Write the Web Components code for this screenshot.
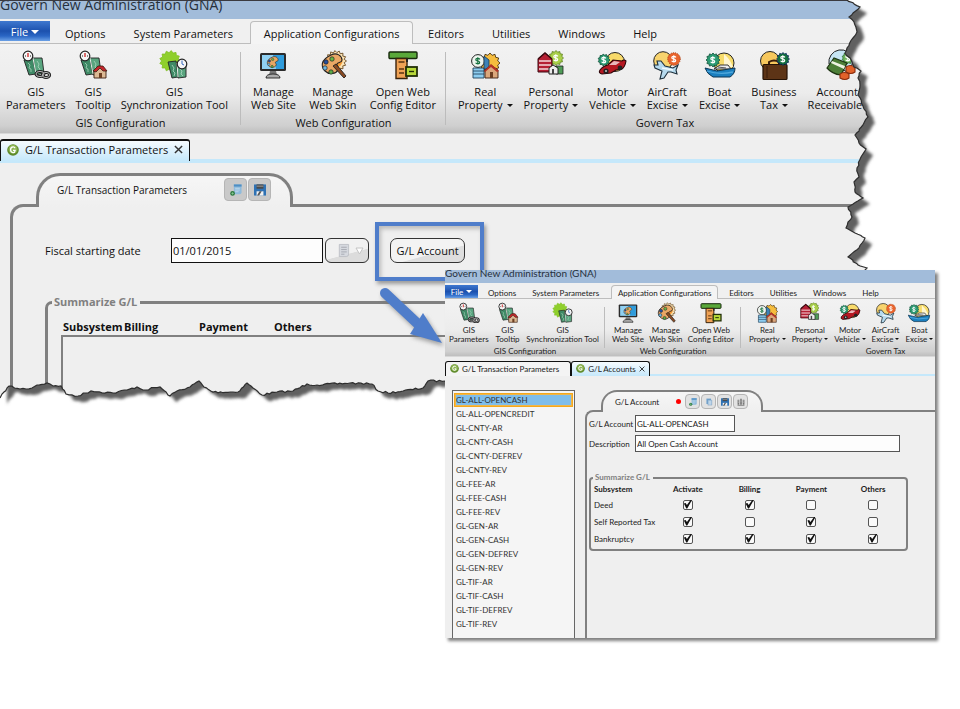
<!DOCTYPE html>
<html lang="en">
<head>
<meta charset="utf-8">
<title>Govern New Administration (GNA)</title>
<style>
  body { margin: 0; background: #fff; }
</style>
</head>
<body>
<gna-stage></gna-stage>

<script>
/* Registers an element with an open shadow root holding the given style and markup. */
function define(name, css, html, setup) {
  const tpl = document.createElement('template');
  tpl.innerHTML = '<style>*{box-sizing:border-box}button,input{font:inherit;color:inherit;margin:0}' + css + '</style>' + html;
  customElements.define(name, class extends HTMLElement {
    connectedCallback() {
      if (this.shadowRoot) return;
      const root = this.attachShadow({ mode: 'open' });
      root.append(tpl.content.cloneNode(true));
      if (setup) setup(this, root);
    }
  });
}

/* ---------- icon drawings, all on a 28 unit grid ---------- */
const star = (cx, cy, r, n, fill, stroke) => {
  let p = '';
  for (let i = 0; i < n * 2; i++) {
    const a = Math.PI * i / n, q = i % 2 ? r * 0.8 : r;
    p += (cx + q * Math.cos(a)).toFixed(1) + ',' + (cy + q * Math.sin(a)).toFixed(1) + ' ';
  }
  return `<polygon points="${p}" fill="${fill}" stroke="${stroke || 'none'}" stroke-width=".8"/>`;
};
const dollar = (x, y, c) => `<path d="M${x + 2} ${y - 1.6}q-1-1.2-2.4-1.1-1.8.1-1.8 1.4 0 1 1.9 1.3 2 .3 2 1.4 0 1.3-1.9 1.4-1.5 0-2.2-1.1M${x - .2} ${y - 3.8}v7.4" fill="none" stroke="${c}" stroke-width="1.2"/>`;
const books = `<path d="M2 9l9-2 3 16-7 1z" fill="#3f8a66" stroke="#222" stroke-width=".9"/><path d="M11 7l9 0 2 15-8 2z" fill="#59a57f" stroke="#222" stroke-width=".9"/><path d="M6 12l2 2-1 3 2 1 0 3M15 10l2 3-1 3 2 2-1 3" fill="none" stroke="#b4dcc6" stroke-width=".7"/><path d="M11 7l3 16" stroke="#e8f4ec" stroke-width="1"/><circle cx="6" cy="5" r="4.8" fill="#f6f6f6" stroke="#222" stroke-width="1.2"/><path d="M6 2v4" stroke="#c22" stroke-width="1.3"/><path d="M3 5h1M8 5h1" stroke="#222"/>`;
const palette = `<path d="M12 4c6-3 11 1 11 5 0 3-4 2-5 4s3 3 1 6c-2 4-9 5-13 1S1 9 12 4z" fill="#e9a765" stroke="#222" stroke-width="1.1"/><circle cx="13" cy="8" r="2.2" fill="#69b544" stroke="#222" stroke-width=".7"/><circle cx="7" cy="11" r="2.2" fill="#244fa0" stroke="#222" stroke-width=".7"/><circle cx="6" cy="17" r="2.2" fill="#6db8e4" stroke="#222" stroke-width=".7"/><circle cx="12" cy="21" r="2.2" fill="#5aaa46" stroke="#222" stroke-width=".7"/>`;
const ICONS = {
  params: books + `<g fill="none" stroke="#222" stroke-width="3"><ellipse cx="18" cy="23" rx="4" ry="2.6"/><ellipse cx="24" cy="24" rx="3.6" ry="2.6"/></g><g fill="none" stroke="#b5b5b5" stroke-width="1"><ellipse cx="18" cy="23" rx="4" ry="2.6"/><ellipse cx="24" cy="24" rx="3.6" ry="2.6"/></g>`,
  tooltip: books + `<path d="M15 27v-7l6-5 6 5v7z" fill="#dcb995" stroke="#3a1d10" stroke-width=".9"/><path d="M14 20l5-5h5l4 5h-4l-3-3-4 4z" fill="#c3262c" stroke="#3a1d10" stroke-width=".8"/><path d="M20 22h3v5h-3z" fill="#6d3f22"/>`,
  sync: star(10, 10, 10.500, 13, '#8fcf2c', '#7fbf22') + `<path d="M8 11l8-1 2 16-6 1z" fill="#3f8a66" stroke="#222" stroke-width=".9"/><path d="M17 12l9 1v13l-8 1z" fill="#59a57f" stroke="#222" stroke-width=".9"/><path d="M12 14l2 3-1 3 2 2-1 3M20 18l2 2-1 3 2 2" fill="none" stroke="#b4dcc6" stroke-width=".8"/><path d="M17 12l1 14" stroke="#e8f4ec"/><circle cx="22" cy="13" r="4.8" fill="#f6f6f6" stroke="#222" stroke-width="1.2"/><path d="M22 13V9.500M22 13l2 1" stroke="#3568c0"/>`,
  site: `<rect x="1" y="2" width="26" height="18" rx="1.500" fill="#2b2b2b"/><rect x="3" y="4" width="22" height="14" fill="#8fd0f2"/><path d="M14 4h11v14h-8z" fill="#2f9cdc"/><path d="M11 20h6l1 4h-8z" fill="#777"/><path d="M7 27q0-4 7-4t7 4z" fill="#aaa" stroke="#222" stroke-width=".9"/><g transform="translate(6.500 4) scale(.55)">${palette}</g>`,
  skin: star(17, 10, 10.500, 15, '#fbe3b4', '#5a3a10') + `<circle cx="17" cy="10" r="6.500" fill="#f59a35"/>` + palette + `<path d="M14 15l3-2 10 12-2 2z" fill="#8a4a22" stroke="#222" stroke-width=".9"/>`,
  config: `<rect x="0" y="1" width="28" height="6.500" rx="1" fill="#5aa83a" stroke="#16290c" stroke-width="1.400"/><path d="M7 7.500h11v20H7z" fill="#f0a255" stroke="#3a230c" stroke-width="1.400"/><path d="M9.500 11h6M10 18h5M10 22h5" stroke="#5a3310" stroke-width="1.300"/><path d="M18 11v-3.500" stroke="#222" stroke-width="2"/><rect x="17" y="16" width="11" height="9" fill="#b8d93a" stroke="#222f08" stroke-width="1.800"/><path d="M20 20.500h5" stroke="#222f08" stroke-width="1.400"/>`,
  real: star(19, 12, 10, 12, '#f6bd3e', '#3a2404') + `<circle cx="7" cy="10" r="6.400" fill="#eef4ee" stroke="#222"/>` + dollar(7, 10, '#14703e') + `<path d="M2 27V17h11v10z" fill="#8dcdf0" stroke="#23445c" stroke-width=".9"/><path d="M2 20h11M2 23h11M13 5l5 4v9h-5z" fill="#3c82b8" stroke="#1c3850" stroke-width=".8"/><path d="M14 27v-8l6-5 7 5v8z" fill="#dba77c" stroke="#3a1d10" stroke-width=".9"/><path d="M13 20l7-7 8 7-2 1-6-5-6 5z" fill="#b43226"/><path d="M19 21h3v6h-3z" fill="#6d3f22"/>`,
  personal: star(19, 7, 7.5, 12, '#a9cf4a', '#597d18') + dollar(19, 7, '#fff') + `<path d="M1 21V8l7-6 7 6v13z" fill="#b51f33" stroke="#3b0910"/><path d="M2 10h12M2 14h12M2 18h12" stroke="#f3d9dc" stroke-width="1.400"/><path d="M1 8l7-6 7 6" fill="none" stroke="#3b0910" stroke-width="1.600"/><path d="M19 15h7v8h-7z" fill="#4f9c57" stroke="#222" stroke-width=".8"/><path d="M12 23v-6l4-3 5 3v6z" fill="#ededed" stroke="#222"/><path d="M15 18h2v5h-2z" fill="#444"/>`,
  motor: `<circle cx="17" cy="11" r="9.500" fill="#f8da6a" stroke="#222"/>` + star(6, 9, 6, 11, '#2b9a72', '#11523a') + dollar(6, 9, '#fff') + `<path d="M2 19q3-4 8-5l5-5 9 1q2-2 4 0-1 6-4 8l-6 1-5 3-9 1q-4-1-2-4z" fill="#b51822" stroke="#2b0508" stroke-width="1.100"/><path d="M11 14l5-4 6 1-4 3z" fill="#e8b9bd"/><circle cx="8" cy="20" r="2.600" fill="#222"/><circle cx="22" cy="17" r="2.400" fill="#222"/><circle cx="8" cy="20" r="1" fill="#ccc"/>`,
  air: `<circle cx="10" cy="10" r="9.300" fill="#f8d46e" stroke="#222"/><circle cx="21" cy="8" r="6.300" fill="#e8642d" stroke="#a83c10" stroke-dasharray="1 1"/>` + dollar(21, 8, '#fff') + `<path d="M4 10l4 0 4 5 8 2 5-3-2 5 1 4-6-2-3 0-4 6-4 1 2-8-7-3-1-3 4 0z" fill="#b6daee" stroke="#1d2f3b" stroke-width="1.100"/><path d="M9 17l11 2" stroke="#f4fafd" stroke-width="1.300"/>`,
  boat: `<ellipse cx="18" cy="12" rx="10" ry="10" fill="#f7dc6b" stroke="#222"/><path d="M18 3q6 5 9 13l-9 1z" fill="#fff6cf"/>` + star(7, 9, 7, 12, '#2b9a72', '#11523a') + dollar(7, 9, '#fff') + `<path d="M8 18l6-4 8 0 3 4z" fill="#ededed" stroke="#222" stroke-width=".9"/><path d="M12 16l8 1" stroke="#555"/><path d="M-1 17l12 3 18-3q0 6-5 9H7q-6-3-8-9z" fill="#1b7fbf" stroke="#0d3552"/><path d="M1 20q12 4 26 1" fill="none" stroke="#4fa8dc" stroke-width="1.300"/>`,
  business: `<circle cx="10" cy="10" r="9.500" fill="#f7c85d" stroke="#222"/><path d="M9 15v-4q5-3 10 0v4" fill="none" stroke="#3a1d0b" stroke-width="2"/><rect x="3" y="13.500" width="24" height="15" rx="1" fill="#5d3416" stroke="#241205" stroke-width="1.200"/><path d="M7 15v12" stroke="#3a1d0b"/>` + star(23, 8, 6.500, 12, '#14713f', '#0a2a5c') + dollar(23, 8, '#fff'),
  accounts: `<path d="M3 13a11 11 0 0 1 24-4l-3 13z" fill="#c6e6f4" stroke="#222"/>` + star(22, 7, 6, 11, '#6fb35d', '#2b6f35') + dollar(22, 7, '#fff') + `<path d="M1 17l7-10 13 5-6 12q-9-1-14-7z" fill="#4d7f38" stroke="#1d3312" stroke-width="1.200"/><path d="M6 10l13 5-1 3-13-6z" fill="#eef3e2"/><path d="M14 23q4-3 9 0v4q-4 3-9 0zM20 16q4-3 9 0v5q-4 3-9 0z" fill="#e2622a" stroke="#8b2c0c" stroke-width="1.100"/>`,
  gem: `<circle cx="14" cy="14" r="13.500" fill="#5f8a2c"/><circle cx="14" cy="12" r="10.500" fill="#8db552"/><path d="M19 10q-2-4-6-3-5 1-4.500 7t6 6q4 0 4.500-5h-5" fill="none" stroke="#fff" stroke-width="3"/>`,
  add: `<path d="M9 1h18v18q0 5-5 5H9z" fill="#8fbbdc"/><path d="M9 1h18v5H9z" fill="#4f8fc4"/><path d="M12 10h11M12 14h11M12 18h8" stroke="#d6e7f4" stroke-width="1.500"/><circle cx="6" cy="22" r="5.500" fill="#2c7a3e"/><path d="M6 19v6M3 22h6" stroke="#9fd6ac" stroke-width="1.400"/>`,
  copy: `<path d="M5 2h16v19H5z" fill="#6fa2cd"/><path d="M10 7h14v18H10z" fill="#a9c8e2" stroke="#6388ae"/><path d="M13 13h8M13 17h8M13 21h8" stroke="#eef5fb" stroke-width="1.400"/>`,
  save: `<path d="M0 1h28v26H0z" fill="#2f72b4"/><path d="M6 1h16v10H6z" fill="#4a4a4a"/><path d="M6 5h16" stroke="#aaa" stroke-width="2"/><path d="M6 17h16v10H6z" fill="#f2f2f2"/><path d="M7 27l6-10h5l-6 10z" fill="#555"/>`,
  chart: `<path d="M2 6h6v18H2zM11 3h6v21h-6zM20 6h6v18h-6z" fill="#777"/><path d="M4 10h2M13 7h2M22 10h2M4 15h2M13 13h2M22 15h2" stroke="#fff" stroke-width="2"/><path d="M2 26h24" stroke="#555" stroke-width="2"/>`,
  note: `<path d="M5 1h20v21q0 5-5 5H5z" fill="#d6d9df" stroke="#b3b6bd" stroke-width="1.500"/><path d="M9 7h12M9 12h12M9 17h12M9 22h7" stroke="#a4a8b0" stroke-width="2"/>`
};

define('gna-icon', `:host{display:block;width:var(--icon-size,28px);height:var(--icon-size,28px)}svg{display:block;width:100%;height:100%;overflow:visible}`, '',
  (host, root) => {
    root.innerHTML += `<svg viewBox="0 0 28 28" aria-hidden="true">${ICONS[host.getAttribute('name')]}</svg>`;
  });

/* ---------- window chrome ---------- */
define('title-bar', `
  :host{display:block;height:var(--title-h);overflow:hidden;background:#a2bcda;border-top:var(--title-line) solid #3a3a40;color:#26303c}
  div{font-size:var(--title-fs);line-height:20px;margin-top:var(--title-shift);white-space:nowrap}`,
  `<div><slot></slot></div>`);

define('menu-bar', `
  :host{display:flex;align-items:flex-end;height:var(--menu-h);background:#f0f0f0;border-bottom:1px solid #bdbdbd;padding-right:0}
  button{border:1px solid transparent;border-bottom:0;background:none;padding:0 var(--menu-pad);height:calc(var(--menu-h) - 2px);margin-bottom:-1px;white-space:nowrap;flex:none;line-height:1}
  .file{align-self:flex-start;border:0;margin:2px var(--file-gap) 0 0;width:var(--file-w);height:var(--file-h);padding:0;color:#fff;background:linear-gradient(#3f78cf,#1c51ae 50%,#2a66c4 75%,#6aa0e6)}
  .file i{display:inline-block;border:solid transparent;border-width:var(--tri) var(--tri) 0;border-top-color:#fff;margin-left:3px;vertical-align:2px}
  .on{border-color:#bdbdbd;border-radius:4px 4px 0 0;background:#f4f4f4;padding:0;width:var(--on-w);margin:0 var(--on-gap-r) -1px var(--on-gap)}`,
  `<button class="file">File<i></i></button>`,
  (host, root) => {
    for (const t of ['Options', 'System Parameters', 'Application Configurations', 'Editors', 'Utilities', 'Windows', 'Help']) {
      const b = document.createElement('button');
      b.textContent = t;
      if (t.startsWith('App')) b.className = 'on';
      root.append(b);
    }
  });

define('ribbon-bar', `
  :host{display:flex;height:var(--ribbon-h);overflow:hidden;background:linear-gradient(#f2f2f2,#ececec 55%,#cfcfcf 92%,#bebebe);border-bottom:1px solid #d8d8d8}`,
  `<slot></slot>`);

define('ribbon-group', `
  :host{display:flex;flex-direction:column;flex:none;position:relative}
  .items{display:flex;justify-content:var(--justify,space-between);gap:var(--items-gap,0);padding:var(--group-pad)}
  .label{text-align:center;line-height:var(--label-lh);margin-top:var(--label-gap)}
  :host(:not(:last-child))::after{content:"";position:absolute;right:0;top:8px;bottom:8px;border-right:1px solid #bcbcbc}`,
  `<div class="items"><slot></slot></div><div class="label"></div>`,
  (host, root) => { root.querySelector('.label').textContent = host.getAttribute('label'); });

define('ribbon-item', `
  :host{display:block;flex:none}
  button{border:0;background:none;padding:0;display:flex;flex-direction:column;align-items:center;line-height:var(--item-lh);white-space:nowrap;gap:var(--item-gap)}
  i{display:inline-block;border:solid transparent;border-width:var(--caret) var(--caret) 0;border-top-color:#111;margin-left:var(--caret-gap);vertical-align:2px}`,
  `<button><gna-icon></gna-icon><span><slot></slot></span></button>`,
  (host, root) => {
    const icon = document.createElement('gna-icon');
    icon.setAttribute('name', host.getAttribute('icon'));
    root.querySelector('gna-icon').replaceWith(icon);
    if (host.hasAttribute('menu')) root.querySelector('span').append(document.createElement('i'));
  });

define('gna-ribbon', `:host{display:block}`, `
  <ribbon-bar>
    <ribbon-group label="GIS Configuration" style="width:var(--g1);--group-pad:var(--gis-pad)">
      <ribbon-item icon="params">GIS<br>Parameters</ribbon-item>
      <ribbon-item icon="tooltip">GIS<br>Tooltip</ribbon-item>
      <ribbon-item icon="sync">GIS<br>Synchronization Tool</ribbon-item>
    </ribbon-group>
    <ribbon-group label="Web Configuration" style="width:var(--g2);--group-pad:var(--web-pad)">
      <ribbon-item icon="site">Manage<br>Web Site</ribbon-item>
      <ribbon-item icon="skin">Manage<br>Web Skin</ribbon-item>
      <ribbon-item icon="config">Open Web<br>Config Editor</ribbon-item>
    </ribbon-group>
    <ribbon-group class="tax" label="Govern Tax" style="width:var(--g3);--group-pad:var(--tax-pad);--items-gap:var(--tax-gap);--justify:flex-start">
      <ribbon-item icon="real" menu>Real<br>Property</ribbon-item>
      <ribbon-item icon="personal" menu>Personal<br>Property</ribbon-item>
      <ribbon-item icon="motor" menu>Motor<br>Vehicle</ribbon-item>
      <ribbon-item icon="air" menu>AirCraft<br>Excise</ribbon-item>
      <ribbon-item icon="boat" menu>Boat<br>Excise</ribbon-item>
    </ribbon-group>
  </ribbon-bar>`,
  (host, root) => {
    if (!host.hasAttribute('full')) return;
    root.querySelector('.tax').insertAdjacentHTML('beforeend',
      `<ribbon-item icon="business" menu>Business<br>Tax</ribbon-item><ribbon-item icon="accounts" menu>Accounts<br>Receivable</ribbon-item>`);
  });

define('doc-tabs', `
  :host{display:flex;padding-top:var(--tabs-top);background:#efefef;border-bottom:var(--strip) solid #c5e8fb}`,
  `<slot></slot>`);

define('doc-tab', `
  :host{display:flex;align-items:center;gap:var(--dt-gap);height:var(--dt-h);margin-bottom:-2px;padding:0 var(--dt-pad) var(--dt-lift);border:1px solid #111;border-width:var(--dt-border);border-bottom:0;border-radius:3px 3px 0 0;background:#f4f4f4;white-space:nowrap;--icon-size:var(--gem)}
  :host([active]){background:linear-gradient(#f6fbfe,#c5e8fb)}
  button{border:0;background:none;padding:0;width:var(--close);height:var(--close);display:none}
  :host([closable]) button{display:block}
  span{margin-right:var(--dt-end)}
  :host([closable]) span{margin-right:0}
  svg{display:block;width:100%;height:100%}`,
  `<gna-icon name="gem"></gna-icon><span><slot></slot></span><button aria-label="Close"><svg viewBox="0 0 10 10"><path d="M1 1l8 8M9 1L1 9" stroke="#333" stroke-width="1.600"/></svg></button>`);

/* ---------- form parts ---------- */
define('tool-button', `
  :host{display:block;--icon-size:var(--tool-icon)}
  button{display:grid;place-items:center;width:var(--tool);height:var(--tool);padding:0;border:1px solid #b5b5b5;border-radius:4px;background:var(--tool-bg)}`,
  `<button></button>`,
  (host, root) => {
    const b = root.querySelector('button');
    b.innerHTML = `<gna-icon name="${host.getAttribute('icon')}"></gna-icon>`;
    b.setAttribute('aria-label', host.getAttribute('icon'));
  });

define('folder-panel', `
  :host{display:flex;flex-direction:column}
  .tab{align-self:flex-start;position:relative;display:flex;align-items:center;height:var(--tab-h);margin:0 0 calc(0px - var(--bw)) var(--tab-x);padding:0 var(--tab-pad-r) var(--tab-lift) var(--tab-pad-l);gap:var(--tool-gap);border:var(--bw) solid #808080;border-bottom:0;border-radius:var(--tab-r) var(--tab-r) 0 0;background:linear-gradient(#f6f6f6,#efefef);white-space:nowrap;font-size:var(--tab-fs)}
  .title{margin-right:var(--tab-gap)}
  .body{flex:1;border:solid #808080;border-width:var(--bw) 0 0 var(--bw);border-top-left-radius:var(--tab-r2);padding:var(--body-pad)}`,
  `<div class="tab"><span class="title"></span><slot name="tools"></slot></div><div class="body"><slot></slot></div>`,
  (host, root) => { root.querySelector('.title').textContent = host.getAttribute('label'); });

define('text-field', `
  :host{display:flex;align-items:center}
  label{flex:none;width:var(--label-w);white-space:nowrap}
  input{width:var(--field-w);height:var(--field-h);border:1px solid var(--field-line);background:#fdfdfd;padding:0 1px;outline:0;border-radius:0;min-width:0}`,
  `<label for="f"></label><input id="f">`,
  (host, root) => {
    root.querySelector('label').textContent = host.getAttribute('label');
    root.querySelector('input').setAttribute('value', host.getAttribute('value'));
  });

define('legend-box', `
  :host{display:block}
  fieldset{margin:0;border:var(--bw) solid #808080;border-radius:var(--fs-r);padding:var(--fs-pad);min-width:0}
  legend{font-weight:bold;color:#808080;padding:0 3px 0 2px;margin-left:var(--lg-x);line-height:var(--lg-lh)}`,
  `<fieldset><legend></legend><slot></slot></fieldset>`,
  (host, root) => { root.querySelector('legend').textContent = host.getAttribute('label'); });

define('date-picker', `
  button{display:flex;align-items:center;justify-content:center;gap:5px;width:44px;height:25px;border:1px solid #333;border-radius:6px;padding:0 2px 0 8px;background:linear-gradient(165deg,#f1f1f1 60%,#dcdcdc 62%);--icon-size:13px}
  :host{display:block}
  svg{display:block}`,
  `<button aria-label="Choose date"><gna-icon name="note"></gna-icon><svg width="9" height="8" viewBox="0 0 9 8"><path d="M1 1h7L4.500 7z" fill="#fff" stroke="#c4c4c4"/></svg></button>`);

define('marked-button', `
  :host{display:block;position:relative}
  button{height:25px;padding:0;width:75px;border:1px solid #333;border-radius:7px;background:linear-gradient(165deg,#f3f3f3 60%,#dedede 62%);white-space:nowrap}
  .mark{position:absolute;inset:-16px -19px -18px -15px;border:4px solid #4f7dca;box-shadow:2px 3px 4px #9a9a9a,inset 2px 3px 4px #bbb;pointer-events:none}`,
  `<button><slot></slot></button><div class="mark"></div>`);

define('summary-head', `
  :host{display:block}
  table{border-collapse:collapse;table-layout:fixed;width:100%}
  th{text-align:left;padding:0 0 0 1px;font-weight:bold;line-height:16px;white-space:nowrap}
  th:nth-child(1){width:61px}th:nth-child(2),th:nth-child(3){width:75px}
  td{border:2px solid #808080;height:70px;padding:0}`,
  `<table><thead><tr><th>Subsystem</th><th>Billing</th><th>Payment</th><th>Others</th></tr></thead><tbody><tr><td colspan="4"></td></tr></tbody></table>`);

define('summary-grid', `
  :host{display:block}
  table{border-collapse:collapse;table-layout:fixed;width:100%}
  th,td{padding:0;text-align:center;height:17px;white-space:nowrap;line-height:12px;font-weight:normal}
  thead th{font-weight:bold;height:14px}
  tr>:first-child{text-align:left;padding-left:1px;width:64px}
  input{appearance:none;display:block;margin:0 auto;width:10px;height:10px;border:1px solid #555;border-radius:2px;background:#fafafa;position:relative}
  input:checked::before{content:"";position:absolute;inset:-1px 0 0 0;background:#111;clip-path:polygon(0 45%,22% 38%,38% 62%,88% 0,100% 8%,42% 100%,30% 100%)}`,
  `<table><thead><tr><th>Subsystem</th><th>Activate</th><th>Billing</th><th>Payment</th><th>Others</th></tr></thead><tbody></tbody></table>`,
  (host, root) => {
    const cols = ['Activate', 'Billing', 'Payment', 'Others'];
    const rows = [['Deed', 1, 1, 0, 0], ['Self Reported Tax', 1, 0, 1, 0], ['Bankruptcy', 1, 1, 1, 1]];
    root.querySelector('tbody').innerHTML = rows.map(([n, ...v]) =>
      `<tr><th scope="row">${n}</th>${v.map((c, i) => `<td><input type="checkbox" aria-label="${n} ${cols[i]}"${c ? ' checked' : ''}></td>`).join('')}</tr>`).join('');
  });

define('account-list', `
  :host{display:block;border:1px solid #666;border-bottom:0;background:#f5f5f5;padding:2px 1px 7px}
  ul{list-style:none;margin:0;padding:0}
  button{display:block;width:100%;height:14px;border:1px solid transparent;background:none;padding:0 1px;text-align:left;line-height:12px;color:#333}
  [aria-current]{background:#7fbdea;border-color:#f5a81c;box-shadow:0 0 0 1px #f0b64a inset}`,
  `<ul></ul>`,
  (host, root) => {
    const names = 'ALL-OPENCASH ALL-OPENCREDIT CNTY-AR CNTY-CASH CNTY-DEFREV CNTY-REV FEE-AR FEE-CASH FEE-REV GEN-AR GEN-CASH GEN-DEFREV GEN-REV TIF-AR TIF-CASH TIF-DEFREV TIF-REV'.split(' ');
    root.querySelector('ul').innerHTML = names.map((n, i) => `<li><button${i ? '' : ' aria-current="true"'}>GL-${n}</button></li>`).join('');
  });

/* ---------- torn paper edge: ragged outline, soft shadow and white beyond it ---------- */
const EDGES = {
  right: { w: 50, h: 410, pts: [[13,0],[26,7],[15,17],[20,22],[23,32],[19,38],[13,48],[11,53],[16,58],[20,67],[27,71],[24,78],[26,85],[24,95],[29,106],[34,117],[29,125],[21,135],[25,143],[32,149],[27,157],[23,168],[25,177],[20,182],[21,192],[29,198],[14,207],[18,217],[14,222],[12,228],[21,233],[31,238],[28,243],[25,248],[14,257],[24,265],[33,268],[25,280],[25,410]] },
  bottom: { w: 884, h: 50, pts: [[0,38],[4,32],[9,26],[20,29],[32,28],[37,25],[47,23],[53,26],[61,26],[66,34],[78,36],[91,31],[113,33],[127,30],[137,27],[143,30],[160,27],[170,36],[177,31],[190,27],[199,21],[204,27],[213,32],[238,32],[247,23],[253,28],[262,35],[277,32],[293,31],[307,24],[317,25],[350,23],[372,24],[378,31],[388,33],[403,31],[423,28],[428,21],[445,21],[884,24]] }
};
define('torn-edge', `
  :host{display:block;position:absolute;right:0;bottom:0;pointer-events:none;overflow:hidden}
  :host([side=right]){top:0}
  :host([side=bottom]){left:0}
  svg{display:block}`, '',
  (host, root) => {
    const side = host.getAttribute('side'), { w, h, pts } = EDGES[side], down = side === 'right';
    let seed = 7;
    const rnd = () => (seed = seed * 16807 % 2147483647) / 2147483647 - .5;
    const line = [];
    pts.forEach((p, i) => {
      line.push(p);
      const q = pts[i + 1];
      if (!q) return;
      const n = Math.floor(Math.hypot(q[0] - p[0], q[1] - p[1]) / 2.5);
      for (let k = 1; k < n; k++) {
        const t = k / n, j = rnd() * 2;
        line.push([p[0] + (q[0] - p[0]) * t + (down ? j : 0), p[1] + (q[1] - p[1]) * t + (down ? 0 : j)]);
      }
    });
    const s = line.map(p => p[0].toFixed(1) + ',' + p[1].toFixed(1)).join(' ');
    const outer = s + (down ? ` ${w},${h} ${w},0` : ` ${w},${h} 0,${h}`);
    const inner = s + (down ? ` -20,${h} -20,-20` : ` ${w},-20 0,-20`);
    root.innerHTML += `<svg width="${w}" height="${h}" aria-hidden="true">
      <defs><clipPath id="c"><polygon points="${outer}"/></clipPath>
      <filter id="b" x="-20%" y="-20%" width="140%" height="140%"><feGaussianBlur stdDeviation="1.6"/></filter></defs>
      <polygon points="${outer}" fill="#fff"/>
      <g clip-path="url(#c)"><polygon points="${inner}" fill="#606060" filter="url(#b)" transform="translate(7 6)"/></g>
      <polyline points="${s}" fill="none" stroke="#2e2e2e" stroke-width="1.200"/></svg>`;
  });

/* ---------- the two windows ---------- */
define('main-window', `
  :host{display:block;position:relative;overflow:hidden;background:#efefef;color:#111;font:11px "Open Sans","Noto Sans",sans-serif;
    --title-h:19px;--title-fs:14px;--title-shift:-6px;--title-line:1px;--menu-h:25px;--menu-pad:13px;--file-w:50px;--file-h:20px;--file-gap:1px;--tri:4px;--on-w:163px;--on-gap:3px;--on-gap-r:1px;
    --ribbon-h:90px;--g1:241px;--g2:205px;--g3:438px;--gis-pad:7px 13px 0 6px;--web-pad:7px 10px 0;--tax-pad:7px 0 0 12px;--tax-gap:11px;--icon-size:28px;--item-gap:6px;--item-lh:13px;--caret:3px;--caret-gap:4px;--label-lh:16px;--label-gap:4px;
    --tabs-top:5px;--strip:4px;--dt-gap:6px;--dt-h:22px;--dt-pad:6px;--dt-lift:3px;--dt-border:2px 1px 0;--gem:12px;--close:9px;
    --bw:3px;--tab-x:26px;--tab-h:34px;--tab-lift:4px;--tab-pad-l:18px;--tab-pad-r:19px;--tab-gap:36px;--tab-r:24px;--tab-r2:13px;--tab-fs:10px;--tool:23px;--tool-gap:1px;--tool-icon:12px;--tool-bg:#c9c9c9;--body-pad:31px 20px 0 32px;
    --label-w:126px;--field-w:152px;--field-h:25px;--field-line:#111;--fs-r:7px;--fs-pad:9px 13px 0;--lg-x:-9px;--lg-lh:16px}
  folder-panel{margin:10px 0 0 10px}
  .row{display:flex;align-items:center;margin-bottom:31px}
  date-picker{margin:0 21px 0 2px}`,
  `<title-bar>Govern New Administration (GNA)</title-bar>
   <menu-bar></menu-bar>
   <gna-ribbon full></gna-ribbon>
   <doc-tabs><doc-tab active closable>G/L Transaction Parameters</doc-tab></doc-tabs>
   <folder-panel label="G/L Transaction Parameters">
     <tool-button slot="tools" icon="add"></tool-button><tool-button slot="tools" icon="save"></tool-button>
     <div class="row"><text-field label="Fiscal starting date" value="01/01/2015"></text-field><date-picker></date-picker><marked-button>G/L Account</marked-button></div>
     <legend-box label="Summarize G/L"><summary-head></summary-head></legend-box>
   </folder-panel>
   <torn-edge side="bottom"></torn-edge><torn-edge side="right"></torn-edge>`);

define('account-window', `
  :host{display:block;overflow:hidden;background:#efefef;color:#222;font:8px Lato,"Open Sans",sans-serif;box-shadow:3px 3px 3px #808080;
    --title-h:13px;--title-fs:10px;--title-shift:-7px;--title-line:0px;--menu-h:16px;--menu-pad:7px;--file-w:33px;--file-h:13px;--file-gap:2px;--tri:3px;--on-w:107px;--on-gap:4px;--on-gap-r:3px;
    --ribbon-h:58px;--g1:160px;--g2:136px;--g3:289px;--gis-pad:4px 6px 0 4px;--web-pad:4px 7px 0;--tax-pad:4px 0 0 8px;--tax-gap:6px;--icon-size:20px;--item-gap:3px;--item-lh:9px;--caret:2px;--caret-gap:2px;--label-lh:12px;--label-gap:1px;
    --tabs-top:4px;--strip:2px;--dt-gap:3px;--dt-h:15px;--dt-pad:4px;--dt-lift:1px;--dt-end:7px;--dt-border:1px;--gem:9px;--close:6px;
    --bw:2px;--tab-x:16px;--tab-h:22px;--tab-lift:1px;--tab-pad-l:12px;--tab-pad-r:13px;--tab-gap:16px;--tab-r:16px;--tab-r2:8px;--tab-fs:8px;--tool:15px;--tool-gap:1px;--tool-icon:8px;--tool-bg:#e2e2e2;--body-pad:3px 35px 0 2px;
    --label-w:46px;--field-w:100px;--field-h:17px;--field-line:#555;--fs-r:4px;--fs-pad:0 2px 2px;--lg-x:0px;--lg-lh:9px}
  .content{display:grid;grid-template-columns:123px 1fr;column-gap:10px;padding:14px 0 0 7px}
  .wide{--field-w:100%;margin:3px 0 21px}
  legend-box{margin-right:-8px}
  .dot{width:5px;height:5px;border-radius:50%;background:#f00;margin-right:3px}`,
  `<title-bar>Govern New Administration (GNA)</title-bar>
   <menu-bar></menu-bar>
   <gna-ribbon></gna-ribbon>
   <doc-tabs><doc-tab>G/L Transaction Parameters</doc-tab><doc-tab active closable>G/L Accounts</doc-tab></doc-tabs>
   <div class="content">
     <account-list></account-list>
     <folder-panel label="G/L Account">
       <div slot="tools" class="dot"></div><tool-button slot="tools" icon="add"></tool-button><tool-button slot="tools" icon="copy"></tool-button><tool-button slot="tools" icon="save"></tool-button><tool-button slot="tools" icon="chart"></tool-button>
       <text-field label="G/L Account" value="GL-ALL-OPENCASH"></text-field>
       <text-field class="wide" label="Description" value="All Open Cash Account"></text-field>
       <legend-box label="Summarize G/L"><summary-grid></summary-grid></legend-box>
     </folder-panel>
   </div>`);

/* The stage layers the account window and the pointer arrow over the main window. */
define('gna-stage', `
  :host{display:grid;grid-template-columns:minmax(0,1fr);position:relative;align-items:start}
  main-window,account-window{grid-area:1/1}
  main-window{margin-right:76px}
  account-window{margin:270px 25px 70px 445px;position:relative}
  .arrow{position:absolute;left:370px;top:280px;filter:drop-shadow(2px 3px 2px #777a)}`,
  `<main-window></main-window>
   <account-window></account-window>
   <svg class="arrow" width="80" height="72" aria-hidden="true"><path d="M15 13L48 44" stroke="#4f7dca" stroke-width="10" stroke-linecap="round"/><path d="M53 33L72 63L40 54z" fill="#4f7dca"/></svg>`);
</script>
</body>
</html>
